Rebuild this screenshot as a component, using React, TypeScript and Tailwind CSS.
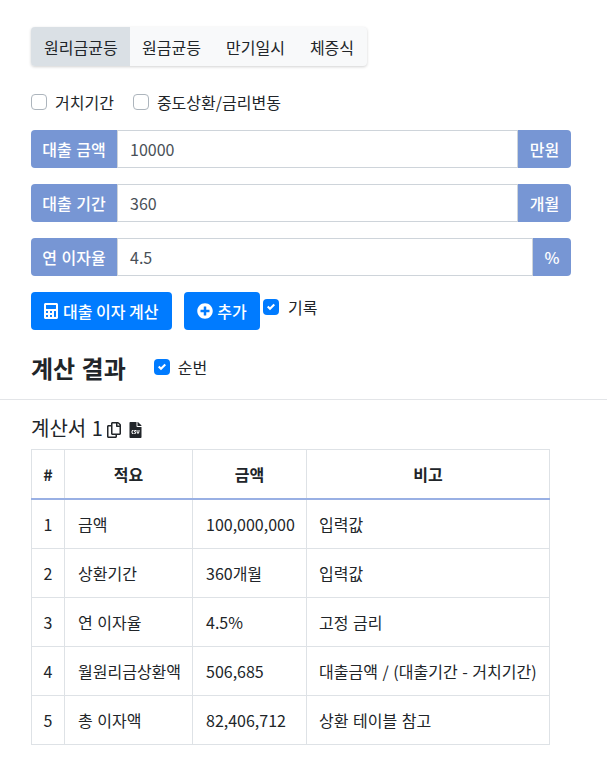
import React from 'react';
import { FaCalculator, FaPlusCircle, FaRegCopy, FaFileCsv } from 'react-icons/fa';

const tabs = ['원리금균등', '원금균등', '만기일시', '체증식'];

const inputs = [
  { label: '대출 금액', value: '10000', unit: '만원', unitClass: 'w-[53px]' },
  { label: '대출 기간', value: '360', unit: '개월', unitClass: 'w-[53px]' },
  { label: '연 이자율', value: '4.5', unit: '%', unitClass: 'w-[38px]' },
];

const rows = [
  ['1', '금액', '100,000,000', '입력값'],
  ['2', '상환기간', '360개월', '입력값'],
  ['3', '연 이자율', '4.5%', '고정 금리'],
  ['4', '월원리금상환액', '506,685', '대출금액 / (대출기간 - 거치기간)'],
  ['5', '총 이자액', '82,406,712', '상환 테이블 참고'],
];

const Check: React.FC<{ checked?: boolean }> = ({ checked }) =>
  checked ? (
    <span className="flex h-4 w-4 shrink-0 items-center justify-center rounded-[4px] bg-[#007bff]">
      <svg viewBox="0 0 8 8" className="h-2 w-2" fill="#fff">
        <path d="M6.564.75l-3.59 3.612-1.538-1.55L0 4.26l2.974 2.99L8 2.193z" />
      </svg>
    </span>
  ) : (
    <span className="h-4 w-4 shrink-0 rounded-[4px] border border-[#adb5bd] bg-white" />
  );

export default function App() {
  return (
    <div className="min-h-[764px] bg-white pt-[27px] text-base leading-6 text-[#212529] [word-spacing:1px] [font-family:'Noto_Sans_CJK_KR','Noto_Sans',sans-serif]">
      <div className="pl-[31px] pr-9">
        {/* Repayment type tabs */}
        <div className="inline-flex h-[39px] rounded-[4px] bg-[#f8f9fa] shadow-[0_1px_3px_rgba(0,0,0,0.18)]">
          {tabs.map((tab, i) => (
            <div
              key={tab}
              className={`flex items-center px-[13px] ${i === 0 ? 'rounded-l-[4px] bg-[#dae0e5] pr-[12.5px]' : '-ml-px'}`}
            >
              {tab}
            </div>
          ))}
        </div>

        {/* Options */}
        <div className="mt-[24px] flex h-6 items-center">
          <Check />
          <span className="ml-2">거치기간</span>
          <span className="ml-[19px] flex items-center">
            <Check />
            <span className="ml-2">중도상환/금리변동</span>
          </span>
        </div>

        {/* Inputs */}
        <div className="mt-4 flex flex-col gap-4">
          {inputs.map(item => (
            <div key={item.label} className="flex h-[38px]">
              <div className="flex w-[86px] items-center justify-center rounded-l-[4px] bg-[#7796d4] font-medium text-white">
                {item.label}
              </div>
              <div className="flex min-w-0 flex-1 items-center border border-[#ced4da] bg-white px-3 text-[#495057]">
                {item.value}
              </div>
              <div className={`flex items-center justify-center rounded-r-[4px] bg-[#7796d4] font-medium text-white ${item.unitClass}`}>
                {item.unit}
              </div>
            </div>
          ))}
        </div>

        {/* Buttons */}
        <div className="mt-4 flex items-start">
          <button className="flex h-[38px] w-[141px] items-center gap-1 rounded-[4px] bg-[#007bff] pl-3 font-medium text-white">
            <FaCalculator className="h-4 w-4" />
            대출 이자 계산
          </button>
          <button className="ml-3 flex h-[38px] w-[76px] items-center justify-center gap-1 rounded-[4px] bg-[#007bff] font-medium text-white">
            <FaPlusCircle className="h-4 w-4" />
            추가
          </button>
          <span className="ml-[3px] flex h-[30px] items-center">
            <Check checked />
            <span className="ml-[9px]">기록</span>
          </span>
        </div>

        {/* Result heading */}
        <div className="mt-[17px] flex h-[42px] items-center">
          <h3 className="text-2xl font-bold">계산 결과</h3>
          <span className="mb-[2px] ml-[28px] flex items-center">
            <Check checked />
            <span className="ml-2">순번</span>
          </span>
        </div>
      </div>

      <hr className="mt-[10px] border-t border-[#e3e5e8]" />

      <div className="pl-[31px] pr-9">
        <div className="mt-4 flex h-6 items-center text-xl">
          계산서 1
          <FaRegCopy className="ml-[3px] mt-[3px] h-4 w-4" />
          <FaFileCsv className="ml-[7px] mt-[3px] h-4 w-[13px]" />
        </div>

        {/* Result table */}
        <table className="mt-[9px] w-[519px] table-fixed border-collapse border border-[#dee2e6]">
          <colgroup>
            <col className="w-[33px]" />
            <col className="w-[128px]" />
            <col className="w-[114px]" />
            <col className="w-[243px]" />
          </colgroup>
          <thead>
            <tr className="h-[49px] border-b-2 border-[#99b0e4] font-bold">
              <th className="border-x border-[#dee2e6]">#</th>
              <th className="border-x border-[#dee2e6]">적요</th>
              <th className="border-x border-[#dee2e6]">금액</th>
              <th className="border-x border-[#dee2e6]">비고</th>
            </tr>
          </thead>
          <tbody>
            {rows.map(row => (
              <tr key={row[0]} className="h-[49px] border-b border-[#dee2e6] first:h-[50px]">
                <td className="border-x border-[#dee2e6] text-center">{row[0]}</td>
                <td className="whitespace-nowrap border-x border-[#dee2e6] pl-[13px]">{row[1]}</td>
                <td className="whitespace-nowrap border-x border-[#dee2e6] pl-[13px]">{row[2]}</td>
                <td className="whitespace-nowrap border-x border-[#dee2e6] pl-3">{row[3]}</td>
              </tr>
            ))}
          </tbody>
        </table>
      </div>
    </div>
  );
}
